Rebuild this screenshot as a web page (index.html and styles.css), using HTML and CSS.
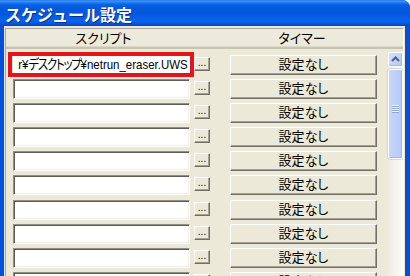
FILE: index.html
```html
<!DOCTYPE html>
<html lang="ja">
<head>
<meta charset="utf-8">
<title>スケジュール設定</title>
<link rel="stylesheet" href="styles.css">
</head>
<body>
<div class="window">
  <div class="titlebar"><span class="title">スケジュール設定</span></div>
  <div class="client">
    <div class="list">
      <div class="list-header">
        <div class="col col-script">スクリプト</div>
        <div class="col col-timer">タイマー</div>
      </div>
      <div class="list-body">
        <div class="rows">
          <div class="row">
            <div class="textbox marked"><span class="path">r¥<span class="ja">デスクトップ</span>¥netrun_eraser.UWS</span></div>
            <button class="browse">...</button>
            <button class="timer">設定なし</button>
          </div>
          <div class="row"><div class="textbox"></div><button class="browse">...</button><button class="timer">設定なし</button></div>
          <div class="row"><div class="textbox"></div><button class="browse">...</button><button class="timer">設定なし</button></div>
          <div class="row"><div class="textbox"></div><button class="browse">...</button><button class="timer">設定なし</button></div>
          <div class="row"><div class="textbox"></div><button class="browse">...</button><button class="timer">設定なし</button></div>
          <div class="row"><div class="textbox"></div><button class="browse">...</button><button class="timer">設定なし</button></div>
          <div class="row"><div class="textbox"></div><button class="browse">...</button><button class="timer">設定なし</button></div>
          <div class="row"><div class="textbox"></div><button class="browse">...</button><button class="timer">設定なし</button></div>
          <div class="row"><div class="textbox"></div><button class="browse">...</button><button class="timer">設定なし</button></div>
          <div class="row"><div class="textbox"></div><button class="browse">...</button><button class="timer">設定なし</button></div>
        </div>
        <div class="scrollbar">
          <div class="sb-up">
            <svg width="13" height="13" viewBox="0 0 13 13"><path d="M3 8 L6.5 4.5 L10 8" fill="none" stroke="#4D6185" stroke-width="2"/></svg>
          </div>
          <div class="sb-thumb"><span class="grip"></span></div>
          <div class="sb-track"></div>
        </div>
      </div>
    </div>
  </div>
  <div class="highlight"></div>
</div>
</body>
</html>
```

FILE: styles.css
```css
html, body {
  margin: 0;
  padding: 0;
}

body {
  width: 410px;
  height: 276px;
  overflow: hidden;
  background: #f4f4f2;
  font-family: "Noto Sans CJK JP", sans-serif;
}

.window {
  position: relative;
  width: 410px;
  height: 276px;
  background: #0650D8;
  border-top-right-radius: 8px;
  overflow: hidden;
  display: flex;
  flex-direction: column;
}

.titlebar {
  height: 26px;
  flex: none;
  box-sizing: border-box;
  padding: 1px 0 0 5px;
  display: flex;
  align-items: center;
  background: linear-gradient(#2A7CF0 0%, #3A8EF6 6%, #1672EE 12%, #0660E2 20%, #0558DC 30%, #0558DE 55%, #0660E6 70%, #0A64EA 80%, #065AE0 88%, #0450D2 94%, #0646BE 100%);
}

.title {
  color: #fff;
  font-weight: bold;
  font-size: 16px;
  line-height: 18px;
  text-shadow: 1px 1px 0 #0B2F95;
}

.client {
  flex: 1;
  min-height: 0;
  margin: 0 5px 0 4px;
  padding: 2px 1px 0 1px;
  background: #ECE9D8;
  display: flex;
}

.list {
  flex: 1;
  min-width: 0;
  display: flex;
  flex-direction: column;
  border-style: solid;
  border-width: 1px 1px 0 1px;
  border-color: #A9A89C #FFFFFF #FFFFFF #A9A89C;
}

.list-header {
  flex: none;
  height: 20px;
  box-sizing: border-box;
  display: flex;
  background: #EBEADB;
  border-bottom: 2px solid #C8C4B3;
  box-shadow: inset 0 -1px 0 #DCD8C8;
}

.col {
  font-size: 13px;
  line-height: 18px;
  color: #000;
  text-align: center;
  font-feature-settings: "palt";
}

.col-script {
  width: 195px;
}

.col-timer {
  flex: 1;
}

.list-body {
  flex: 1;
  min-height: 0;
  display: flex;
  overflow: hidden;
}

.rows {
  flex: 1;
  padding: 6px 0 0 7px;
}

.row {
  display: flex;
  align-items: flex-start;
  height: 20px;
  margin-bottom: 4.1px;
}

.textbox {
  width: 177px;
  height: 20px;
  box-sizing: border-box;
  background: #fff;
  border-style: solid;
  border-width: 1px;
  border-color: #8F8F84 #FFFFFF #FFFFFF #8F8F84;
  box-shadow: inset 1px 1px 0 #5E5E57, inset -1px -1px 0 #F1EFE6;
  display: flex;
  justify-content: flex-end;
  align-items: center;
  overflow: hidden;
  white-space: nowrap;
}

.textbox.marked {
  border-color: #fff;
  box-shadow: none;
  padding-bottom: 2px;
}

.path {
  flex: none;
  padding-right: 2px;
  font-family: "Liberation Sans", "Noto Sans CJK JP", sans-serif;
  font-size: 13.5px;
  line-height: 16px;
  color: #000;
  transform: scaleX(0.85);
  transform-origin: right center;
}

.ja {
  font-family: "Noto Sans CJK JP", sans-serif;
  font-feature-settings: "palt";
  font-size: 13.5px;
  letter-spacing: -1.5px;
}

button {
  appearance: none;
  -webkit-appearance: none;
  margin: 0;
  padding: 0;
  box-sizing: border-box;
  background: #ECE9D8;
  color: #000;
  border-style: solid;
  border-width: 1px;
  border-color: #FFFFFF #707068 #707068 #FFFFFF;
  box-shadow: inset -1px -1px 0 #A3A294;
  font-family: "Noto Sans CJK JP", sans-serif;
}

.browse {
  width: 16px;
  height: 14px;
  margin: 2px 0 0 4px;
  display: flex;
  justify-content: center;
  align-items: flex-end;
  font-family: "Liberation Sans", sans-serif;
  font-size: 10px;
  line-height: 10px;
  padding-bottom: 2px;
}

.timer {
  width: 147px;
  height: 20px;
  margin-left: 20px;
  font-size: 13px;
  line-height: 16px;
  padding-bottom: 2px;
  font-feature-settings: "palt";
}

.scrollbar {
  flex: none;
  width: 15px;
  margin-top: 3px;
  display: flex;
  flex-direction: column;
  background: linear-gradient(to right, #EDEBE2, #FDFDFA);
}

.sb-up {
  flex: none;
  height: 15px;
  box-sizing: border-box;
  border: 1px solid #FFFFFF;
  border-radius: 2px;
  background: linear-gradient(135deg, #D6E2FD, #B3C8F6);
  box-shadow: inset -1px -1px 0 #A2B8E8;
  display: flex;
  align-items: center;
  justify-content: center;
}

.sb-thumb {
  flex: none;
  height: 90px;
  margin-top: 2px;
  box-sizing: border-box;
  border: 1px solid #FFFFFF;
  border-radius: 2px;
  background: linear-gradient(to right, #C6D6FB, #B6CAF6);
  box-shadow: inset -1px -1px 0 #A4B9E6, 0 0 0 0.5px #A9BDE8;
  display: flex;
  align-items: center;
  justify-content: center;
}

.grip {
  display: block;
  width: 7px;
  height: 8px;
  margin-bottom: 10px;
  background: repeating-linear-gradient(#F0F4FE 0 1px, #8EA6DA 1px 2px);
}

.sb-track {
  flex: 1;
}

.highlight {
  position: absolute;
  left: 8px;
  top: 52px;
  width: 186px;
  height: 25px;
  box-sizing: border-box;
  border: 4px solid #E8121A;
}
```
